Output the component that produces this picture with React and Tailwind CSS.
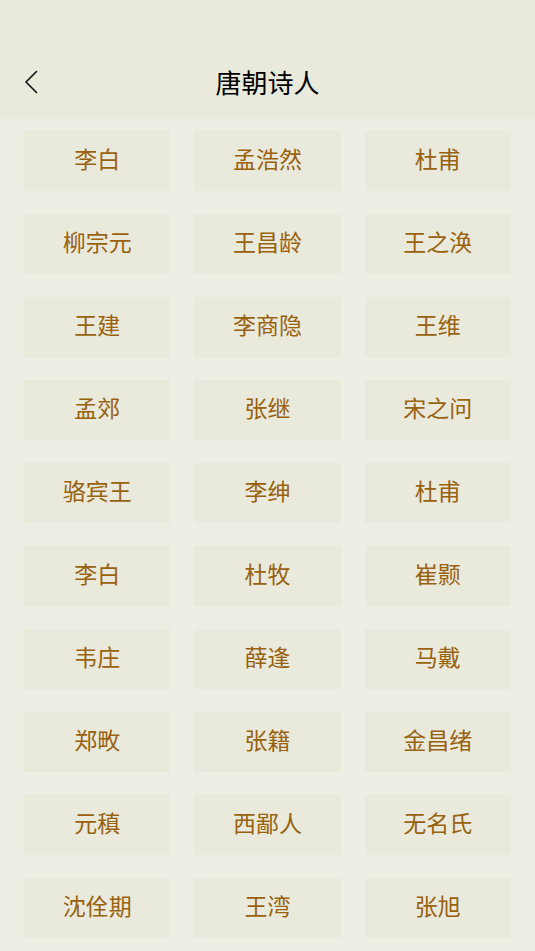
import React from "react";

const poets = [
  "李白", "孟浩然", "杜甫",
  "柳宗元", "王昌龄", "王之涣",
  "王建", "李商隐", "王维",
  "孟郊", "张继", "宋之问",
  "骆宾王", "李绅", "杜甫",
  "李白", "杜牧", "崔颢",
  "韦庄", "薛逢", "马戴",
  "郑畋", "张籍", "金昌绪",
  "元稹", "西鄙人", "无名氏",
  "沈佺期", "王湾", "张旭",
];

export default function App() {
  return (
    <div
      className="w-full min-h-screen bg-[#eeeee5]"
      style={{ fontFamily: '"Noto Sans CJK SC", "Noto Sans", sans-serif' }}
    >
      <header className="h-[119px] bg-[#e9e9dc] pt-[44px]">
        <div className="relative h-[75px] flex items-center justify-center">
          <button className="absolute left-[24px] top-[26px] w-[14px] h-[24px] flex items-center">
            <svg width="14" height="24" viewBox="0 0 14 24" fill="none">
              <path d="M12.5 1.5 L2 12 L12.5 22.5" stroke="#111" strokeWidth="1.6" strokeLinecap="round" strokeLinejoin="round" />
            </svg>
          </button>
          <h1 className="text-[26px] leading-none text-black font-normal">唐朝诗人</h1>
        </div>
      </header>
      <main className="grid grid-cols-3 gap-x-6 gap-y-[23px] px-6 pt-3 pb-3">
        {poets.map((name, i) => (
          <div
            key={i}
            className="h-[60px] bg-[#e9e9dc] flex items-center justify-center pb-[5px] text-[23px] leading-none text-[#98620e]"
          >
            {name}
          </div>
        ))}
      </main>
    </div>
  );
}
